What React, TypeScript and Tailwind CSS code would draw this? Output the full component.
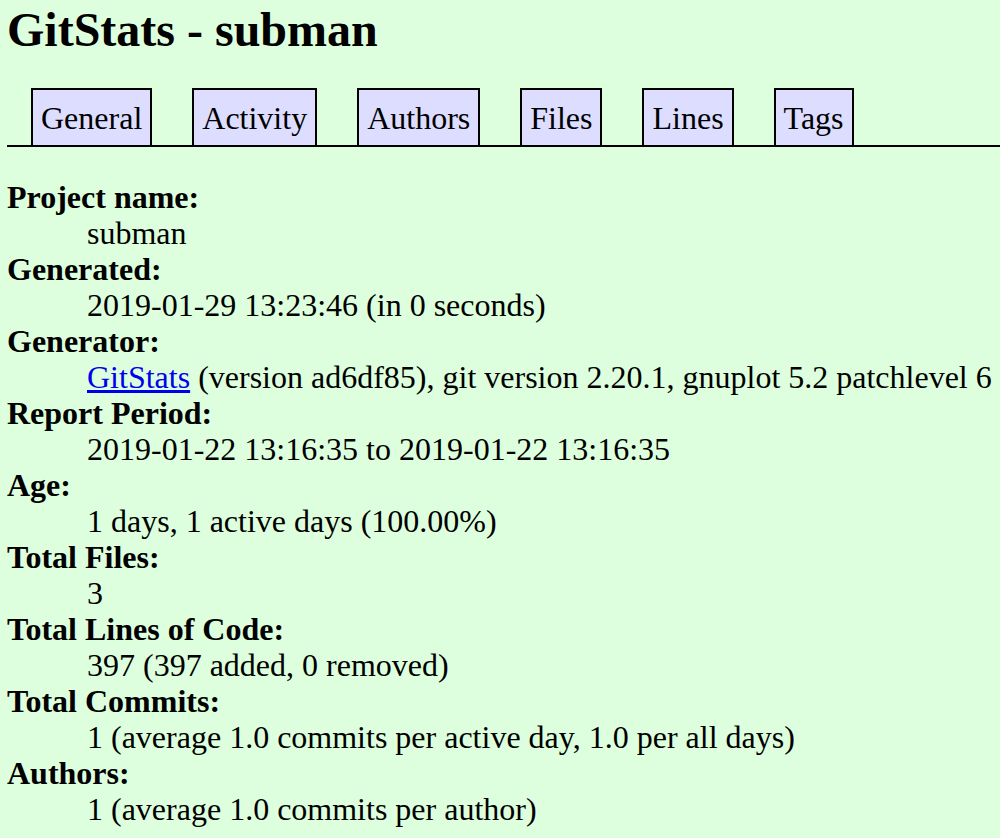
const tabs = ['General', 'Activity', 'Authors', 'Files', 'Lines', 'Tags'];

type Entry = {
  label: string;
  value: React.ReactNode;
};

const entries: Entry[] = [
  { label: 'Project name:', value: 'subman' },
  { label: 'Generated:', value: '2019-01-29 13:23:46 (in 0 seconds)' },
  {
    label: 'Generator:',
    value: (
      <>
        <a href="#" className="text-[#0000ee] underline">
          GitStats
        </a>{' '}
        (version ad6df85), git version 2.20.1, gnuplot 5.2 patchlevel 6
      </>
    ),
  },
  { label: 'Report Period:', value: '2019-01-22 13:16:35 to 2019-01-22 13:16:35' },
  { label: 'Age:', value: '1 days, 1 active days (100.00%)' },
  { label: 'Total Files:', value: '3' },
  { label: 'Total Lines of Code:', value: '397 (397 added, 0 removed)' },
  { label: 'Total Commits:', value: '1 (average 1.0 commits per active day, 1.0 per all days)' },
  { label: 'Authors:', value: '1 (average 1.0 commits per author)' },
];

export default function App() {
  return (
    <div className="min-h-screen bg-[#ddffdd] pl-[7px] font-['Liberation_Serif','Times_New_Roman',serif] text-black">
      <h1 className="pt-[3px] text-[48px] font-bold leading-[53px]">GitStats - subman</h1>

      <div className="mt-[32px] flex border-b-2 border-black pl-[24px]">
        {tabs.map((tab, i) => (
          <div
            key={tab}
            className={`border-2 border-b-0 border-black bg-[#ddddff] px-[8px] pt-[10px] pb-[9px] text-[32px] leading-[36px] ${
              i > 0 ? 'ml-[40px]' : ''
            }`}
          >
            {tab}
          </div>
        ))}
      </div>

      <dl className="mt-[32px] text-[32px] leading-[36px] whitespace-nowrap">
        {entries.map((e) => (
          <div key={e.label}>
            <dt className="font-bold">{e.label}</dt>
            <dd className="ml-[80px]">{e.value}</dd>
          </div>
        ))}
      </dl>
    </div>
  );
}
